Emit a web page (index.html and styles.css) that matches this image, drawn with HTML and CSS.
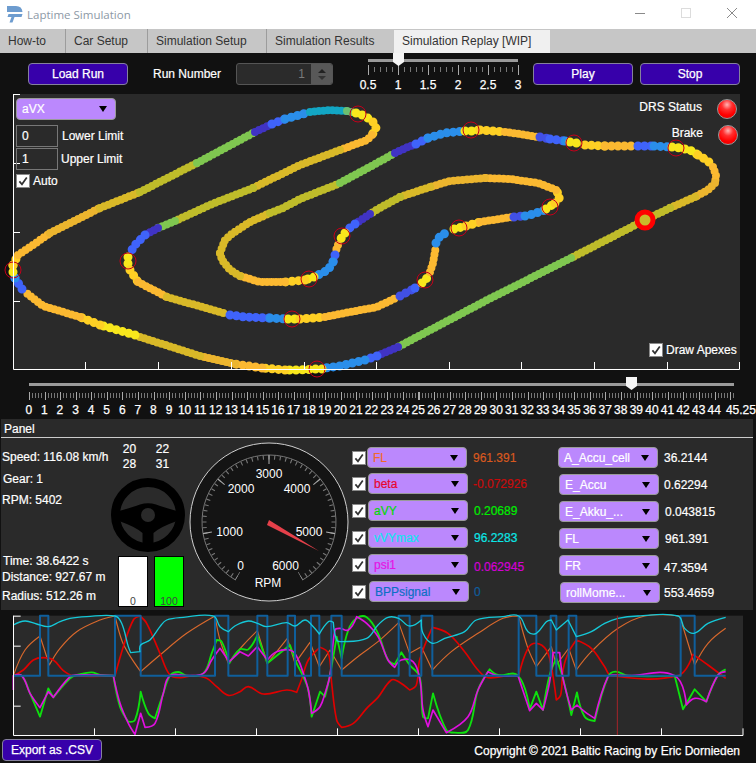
FILE: index.html
```html
<!DOCTYPE html>
<html lang="en">
<head>
<meta charset="utf-8">
<title>Laptime Simulation</title>
<link rel="stylesheet" href="styles.css">
</head>
<body>
<svg class="defs" width="0" height="0" aria-hidden="true"><defs>
<symbol id="tick" viewBox="0 0 14 14"><path d="M2.8 7.4 5.8 10.8 11.4 2.8" fill="none" stroke="#333" stroke-width="2"/></symbol>
<symbol id="caret" viewBox="0 0 8 6"><path d="M0 0H8L4 6Z" fill="#000"/></symbol>
</defs></svg>

<header class="titlebar">
  <svg class="logo" viewBox="0 0 16 17"><path d="M0 0H9Q15 0 15.500 6H0Z M1.500 8H15.500L14.500 11H7.500L5.500 16.500H2.500L4.500 11H.5Z" fill="#6d9ccf"/></svg>
  <span class="app-title">Laptime Simulation</span>
  <div class="win-controls">
    <svg width="10" height="10" viewBox="0 0 10 10"><path d="M0 5.500H10" stroke="#8a8a8a"/></svg>
    <svg width="10" height="10" viewBox="0 0 10 10"><rect x=".5" y=".5" width="9" height="9" fill="none" stroke="#dcdcdc"/></svg>
    <svg width="10" height="10" viewBox="0 0 10 10"><path d="M0 0 10 10M10 0 0 10" stroke="#8a8a8a"/></svg>
  </div>
</header>

<nav class="tabs">
  <span class="tab tab-a">How-to</span>
  <span class="tab tab-b">Car Setup</span>
  <span class="tab tab-c">Simulation Setup</span>
  <span class="tab tab-d">Simulation Results</span>
  <span class="tab tab-active">Simulation Replay [WIP]</span>
</nav>

<section class="controls">
  <button class="btn btn-load">Load Run</button>
  <span class="run-label">Run Number</span>
  <div class="spinner"><span class="spin-value">1</span><span class="spin-arrows"><i class="up"></i><i class="down"></i></span></div>
  <div class="speed-slider">
    <div class="rail"></div>
    <div class="thumb"></div>
    <div class="speed-ticks"></div>
    <div class="speed-labels"><span>0.5</span><span>1</span><span>1.5</span><span>2</span><span>2.5</span><span>3</span></div>
  </div>
  <button class="btn btn-play">Play</button>
  <button class="btn btn-stop">Stop</button>
</section>

<section class="track-plot">
  <svg class="track-svg" width="756" height="276" viewBox="0 94 756 276">
    <rect class="plot-bg" x="14" y="94" width="726" height="275"/>
    <g class="tr">
      <path class="au" d="M220 253 225 240 233 233 250 222 270 213"/>
      <path class="yg" d="M270 213 283 208 300 199 333 186 340 183"/>
      <path class="gr" d="M340 183 377 163 395 153"/>
      <path class="in" d="M395 153 408 147 416 144"/>
      <path class="bl" d="M416 144 428 138"/>
      <path class="sk" d="M428 138 445 133 464 131"/>
      <path class="ye" d="M465 131 471 131 480 130"/>
      <path class="yo" d="M480 130 505 132"/>
      <path class="or" d="M505 132 520 134 538 137"/>
      <path class="in2" d="M540 137 550 139"/>
      <path class="bl" d="M550 139 565 141"/>
      <path class="sk" d="M565 141 570 142"/>
      <path class="ye" d="M570 142 582 144"/>
      <path class="yo" d="M585 145 605 146"/>
      <path class="or bead" d="M605 146 636 146"/>
      <path class="bl" d="M638 146 652 146"/>
      <path class="sk" d="M654 146 670 147"/>
      <path class="ye" d="M672 147 680 148 690 150 698 155"/>
      <path class="yo" d="M698 155 708 161 713 167"/>
      <path class="or" d="M713 167 716 175 715 183"/>
      <path class="or2" d="M715 183 708 190 695 197"/>
      <path class="au" d="M695 197 670 208"/>
      <path class="yg" d="M670 208 645 220 610 238 571 258"/>
      <path class="gr" d="M571 258 491 298 398 347"/>
      <path class="in" d="M398 347 377 356"/>
      <path class="bl" d="M377 356 365 360"/>
      <path class="sk" d="M365 360 340 366 325 368"/>
      <path class="ye" d="M322 369 317 369 300 370 285 370"/>
      <path class="yo" d="M285 370 262 368"/>
      <path class="or bead" d="M262 368 235 364"/>
      <path class="or2" d="M235 364 200 356"/>
      <path class="au" d="M200 356 137 336"/>
      <path class="ye" d="M135 335 100 325"/>
      <path class="yo" d="M100 325 80 317"/>
      <path class="or" d="M80 317 43 306 24 291"/>
      <path class="bl" d="M22 289 15 278"/>
      <path class="sk" d="M15 278 14 272"/>
      <path class="ye" d="M13 272 13 265"/>
      <path class="yo" d="M13 265 18 255"/>
      <path class="or" d="M18 255 33 245 50 233"/>
      <path class="or2" d="M50 233 100 208"/>
      <path class="au" d="M100 208 140 192"/>
      <path class="yg" d="M140 192 197 163"/>
      <path class="gr" d="M197 163 255 132"/>
      <path class="in" d="M255 132 272 124"/>
      <path class="bl" d="M272 124 285 119"/>
      <path class="sk" d="M285 119 310 112"/>
      <path class="cy" d="M310 112 330 110 347 111"/>
      <path class="te" d="M347 111 356 113"/>
      <path class="ye" d="M356 113 365 116 373 122"/>
      <path class="yo" d="M373 122 376 128 372 135"/>
      <path class="or" d="M372 135 367 140 340 150"/>
      <path class="au" d="M340 150 300 165 253 188"/>
      <path class="yg" d="M253 188 212 204 175 221"/>
      <path class="gr" d="M175 221 158 228"/>
      <path class="in" d="M158 228 145 235"/>
      <path class="bl" d="M145 235 135 245 130 253"/>
      <path class="ye" d="M128 257 128 266"/>
      <path class="yo" d="M130 270 138 282"/>
      <path class="or" d="M138 282 167 297"/>
      <path class="au" d="M167 297 227 314"/>
      <path class="bl" d="M230 315 245 317 270 318"/>
      <path class="sk" d="M270 318 285 319"/>
      <path class="ye" d="M288 319 296 319"/>
      <path class="yo" d="M300 319 325 317"/>
      <path class="or" d="M325 317 345 313 377 307 398 297"/>
      <path class="in2" d="M400 296 415 288"/>
      <path class="bl" d="M415 288 420 284"/>
      <path class="ye" d="M422 283 428 277"/>
      <path class="or" d="M430 272 433 263 436 246"/>
      <path class="sk" d="M436 243 440 236 450 231"/>
      <path class="ye" d="M454 229 466 226"/>
      <path class="yo" d="M466 226 480 222"/>
      <path class="or" d="M480 222 512 217"/>
      <path class="in2" d="M514 217 522 216"/>
      <path class="sk" d="M525 216 530 215 545 210"/>
      <path class="ye" d="M546 209 555 203"/>
      <path class="yo" d="M555 203 560 197 556 190"/>
      <path class="or" d="M556 190 538 183 510 179 485 178"/>
      <path class="or2" d="M485 178 450 181 430 187"/>
      <path class="au" d="M430 187 400 197"/>
      <path class="yg" d="M400 197 378 209 370 214"/>
      <path class="in" d="M370 214 355 224"/>
      <path class="bl" d="M355 224 347 230"/>
      <path class="ye" d="M345 233 340 240"/>
      <path class="or" d="M338 245 335 253"/>
      <path class="bl" d="M335 255 333 262"/>
      <path class="sk" d="M333 262 328 270 316 276"/>
      <path class="ye" d="M314 277 305 280"/>
      <path class="yo" d="M305 280 285 282"/>
      <path class="or" d="M285 282 260 282 240 276"/>
      <path class="au" d="M240 276 230 270 222 260 220 253"/>
    </g>
    <g class="apex">
      <circle cx="358" cy="114" r="8"/><circle cx="471" cy="130" r="8"/><circle cx="574" cy="143" r="8"/>
      <circle cx="676" cy="148" r="8"/><circle cx="13" cy="270" r="8"/><circle cx="128" cy="261" r="8"/>
      <circle cx="292" cy="319" r="8"/><circle cx="317" cy="369" r="8"/><circle cx="309" cy="279" r="8"/>
      <circle cx="342" cy="236" r="8"/><circle cx="425" cy="280" r="8"/><circle cx="459" cy="228" r="8"/>
      <circle cx="550" cy="207" r="8"/>
    </g>
    <circle class="car" cx="645" cy="220" r="8"/>
    <path class="axis" d="M13.500 94V369.500H739.500V362M13.500 94.500H20M13.500 163.500H20M13.500 232.500H20M13.500 301.500H20M85.500 369V362M158.500 369V362M231.500 369V362M304.500 369V362M376.500 369V362M449.500 369V362M521.500 369V362M594.500 369V362M667.500 369V362"/>
  </svg>

  <div class="plot-tools">
    <div class="dd dd-plot"><span class="dd-text">aVX</span><svg class="caret"><use href="#caret"/></svg></div>
    <div class="limit limit-lower"><span class="limit-box">0</span><span class="limit-name">Lower Limit</span></div>
    <div class="limit limit-upper"><span class="limit-box">1</span><span class="limit-name">Upper Limit</span></div>
    <div class="check-row"><span class="check"><svg><use href="#tick"/></svg></span><span>Auto</span></div>
  </div>
  <div class="status">
    <div class="status-row status-drs"><span>DRS Status</span><i class="led"></i></div>
    <div class="status-row"><span>Brake</span><i class="led"></i></div>
  </div>
  <div class="check-row apex-toggle"><span class="check"><svg><use href="#tick"/></svg></span><span>Draw Apexes</span></div>
</section>

<section class="timeline">
  <div class="rail"></div>
  <div class="thumb time-thumb"></div>
  <div class="time-ticks"></div>
  <div class="time-labels"><span>0</span><span>1</span><span>2</span><span>3</span><span>4</span><span>5</span><span>6</span><span>7</span><span>8</span><span>9</span><span>10</span><span>11</span><span>12</span><span>13</span><span>14</span><span>15</span><span>16</span><span>17</span><span>18</span><span>19</span><span>20</span><span>21</span><span>22</span><span>23</span><span>24</span><span>25</span><span>26</span><span>27</span><span>28</span><span>29</span><span>30</span><span>31</span><span>32</span><span>33</span><span>34</span><span>35</span><span>36</span><span>37</span><span>38</span><span>39</span><span>40</span><span>41</span><span>42</span><span>43</span><span>44</span><span class="last-label">45.25</span></div>
</section>

<section class="panel">
  <div class="panel-title">Panel</div>
  <div class="panel-body">
    <div class="info">
      <p class="i-speed">Speed: 116.08 km/h</p>
      <p class="i-gear">Gear: 1</p>
      <p class="i-rpm">RPM: 5402</p>
      <p class="i-time">Time: 38.6422 s</p>
      <p class="i-dist">Distance: 927.67 m</p>
      <p class="i-rad">Radius: 512.26 m</p>
    </div>
    <div class="driver">
      <div class="temps"><span>20</span><span>22</span><span>28</span><span>31</span></div>
      <svg class="wheel" width="74" height="74" viewBox="-37 -37 74 74">
        <circle class="wheel-ring" r="32.500"/>
        <path d="M-29 -4Q-15 -8 -8 -10.500 0 -13 8 -10.500 15 -8 29 -4L29 6Q12 12 5.500 18V31H-5.500V18Q-12 12 -29 6Z"/>
        <circle class="wheel-hub" r="7"/>
      </svg>
      <div class="pedals">
        <div class="pedal pedal-throttle"><span>0</span></div>
        <div class="pedal pedal-brake"><span>100</span></div>
      </div>
    </div>
    <svg class="gauge" width="162" height="162" viewBox="-81 -81 162 162">
      <circle class="g-face" r="79"/>
      <path class="g-arc" d="M-33.500 58.020A67 67 0 1 1 33.500 58.020"/>
      <path class="g-minor" pathLength="300" d="M-32.250 55.860A64.500 64.500 0 1 1 32.250 55.860"/>
      <path class="g-major" pathLength="300" d="M-31.250 54.130A62.500 62.500 0 1 1 31.250 54.130"/>
      <text x="0" y="-44">3000</text>
      <text x="-28" y="-29">2000</text>
      <text x="28" y="-29">4000</text>
      <text x="-39.500" y="14">1000</text>
      <text x="40" y="14">5000</text>
      <text x="-28.500" y="48">0</text>
      <text x="16.500" y="48">6000</text>
      <text x="-1" y="65">RPM</text>
      <path class="g-needle" d="M0 -2 -2 3 50 29Z"/>
    </svg>
    <div class="signals sig-a">
      <div class="sig"><span class="check"><svg><use href="#tick"/></svg></span><div class="dd dd-s1"><span class="dd-text c-fl">FL</span><svg class="caret"><use href="#caret"/></svg></div><span class="val val6 v-fl">961.391</span></div>
      <div class="sig gap5"><span class="check"><svg><use href="#tick"/></svg></span><div class="dd dd-s2"><span class="dd-text c-beta">beta</span><svg class="caret"><use href="#caret"/></svg></div><span class="val val5 v-beta">-0.072926</span></div>
      <div class="sig"><span class="check"><svg><use href="#tick"/></svg></span><div class="dd dd-s2"><span class="dd-text c-ay">aVY</span><svg class="caret"><use href="#caret"/></svg></div><span class="val val6 v-ay">0.20689</span></div>
      <div class="sig"><span class="check"><svg><use href="#tick"/></svg></span><div class="dd dd-s2"><span class="dd-text c-vy">vVYmax</span><svg class="caret"><use href="#caret"/></svg></div><span class="val val6 v-vy">96.2283</span></div>
      <div class="sig gap7"><span class="check"><svg><use href="#tick"/></svg></span><div class="dd dd-s2"><span class="dd-text c-psi">psi1</span><svg class="caret"><use href="#caret"/></svg></div><span class="val val6 val-low v-psi">0.062945</span></div>
      <div class="sig"><span class="check"><svg><use href="#tick"/></svg></span><div class="dd dd-s3"><span class="dd-text c-bpp">BPPsignal</span><svg class="caret"><use href="#caret"/></svg></div><span class="val val5 v-bpp">0</span></div>
    </div>
    <div class="signals sig-b">
      <div class="sig"><div class="dd"><span class="dd-text">A_Accu_cell</span><svg class="caret"><use href="#caret"/></svg></div><span class="val val6">36.2144</span></div>
      <div class="sig"><div class="dd dd-s1"><span class="dd-text">E_Accu</span><svg class="caret"><use href="#caret"/></svg></div><span class="val val5">0.62294</span></div>
      <div class="sig"><div class="dd dd-s1"><span class="dd-text">E_Akku_...</span><svg class="caret"><use href="#caret"/></svg></div><span class="val val6">0.043815</span></div>
      <div class="sig"><div class="dd dd-s1"><span class="dd-text">FL</span><svg class="caret"><use href="#caret"/></svg></div><span class="val val6">961.391</span></div>
      <div class="sig gap7"><div class="dd dd-s1"><span class="dd-text">FR</span><svg class="caret"><use href="#caret"/></svg></div><span class="val val5 val-low">47.3594</span></div>
      <div class="sig"><div class="dd dd-s2"><span class="dd-text">rollMome...</span><svg class="caret"><use href="#caret"/></svg></div><span class="val val4">553.4659</span></div>
    </div>
  </div>
</section>

<svg class="chart" width="756" height="128" viewBox="0 0 2268 384">
  <rect class="plot-bg" x="42" y="17" width="2187" height="359"/>
  <polyline class="trace t-orange" points="40,197 75,120 120,78 148,165 180,115 230,65 300,30 345,18 365,90 385,130 422,185 480,135 560,70 645,18 660,90 685,160 730,105 772,62 802,160 862,85 885,160 930,97 958,170 990,120 1025,180 1080,135 1134,95 1196,38 1229,130 1264,110 1297,180 1354,125 1434,70 1509,25 1556,18 1584,115 1609,170 1654,110 1669,165 1706,115 1729,180 1774,125 1854,55 1934,18 2039,18 2084,165 2124,100 2177,55"/>
  <polyline class="trace t-red" points="40,197 70,180 100,150 130,143 160,150 190,182 220,197 345,197 370,110 400,30 420,18 440,40 480,130 510,195 540,203 580,197 620,205 650,230 685,256 720,245 745,230 790,252 860,240 890,247 905,208 925,150 960,112 985,130 995,220 1010,330 1025,352 1060,340 1100,295 1134,262 1174,210 1196,215 1229,240 1249,225 1259,150 1297,52 1344,70 1394,125 1434,180 1464,203 1534,195 1556,197 1584,115 1609,100 1639,120 1654,170 1669,270 1682,255 1689,180 1704,130 1729,90 1774,115 1814,170 1834,197 2034,197 2079,133 2124,165 2177,205"/>
  <polyline class="trace t-green" points="40,197 65,197 90,250 120,320 145,235 160,262 210,205 230,195 275,187 300,195 340,197 360,290 385,335 405,330 422,245 445,310 465,325 490,250 510,197 535,186 560,197 610,190 635,130 650,90 665,95 688,160 720,118 745,118 772,75 802,160 870,105 890,160 905,190 925,240 935,320 960,245 975,260 990,195 1010,80 1025,145 1045,60 1070,25 1100,22 1134,70 1164,150 1184,163 1204,127 1229,165 1259,200 1269,320 1284,325 1299,250 1339,360 1364,368 1404,360 1434,240 1469,178 1494,195 1554,197 1589,298 1609,245 1629,300 1649,195 1669,145 1689,205 1714,315 1731,247 1754,320 1784,333 1824,200 1846,185 1884,197 2024,197 2049,298 2084,238 2119,275 2154,195 2177,178"/>
  <polyline class="trace t-magenta" points="40,240 40,197 65,197 90,250 120,293 145,245 160,262 210,200 230,195 340,197 360,280 385,340 405,373 422,310 435,352 465,340 490,250 510,197 560,197 610,190 635,150 660,115 688,155 720,125 745,138 772,110 802,150 830,125 875,122 895,150 910,190 925,240 935,310 960,290 975,250 990,195 1005,60 1020,55 1045,60 1070,20 1100,40 1134,80 1164,150 1184,172 1204,150 1239,155 1259,205 1269,300 1284,350 1299,300 1339,368 1404,320 1434,240 1464,185 1494,197 1554,197 1589,302 1609,280 1629,300 1649,215 1659,128 1679,128 1689,205 1714,300 1731,285 1754,305 1784,325 1824,200 1846,195 1884,197 2024,197 2059,285 2084,265 2119,275 2154,195 2177,185"/>
  <path class="t-blue" d="M40 197H120V17H145V197H345V17H422V197H645V17H685V197H772V17H802V197H863V17H885V197H933V17H958V197H994V17H1025V197H1196V17H1229V197H1264V17H1297V197H1556V17H1609V197H1652V17H1669V197H1706V17H1729V197H2042V17H2084V197H2177"/>
  <polyline class="trace t-cyan" points="40,45 75,33 110,42 145,50 180,35 210,25 260,20 345,18 365,40 385,110 392,128 420,125 422,105 450,90 480,50 500,30 550,22 640,18 660,50 685,65 710,45 745,33 772,40 800,50 860,38 885,48 915,30 935,45 958,72 985,35 1000,37 1010,90 1025,95 1100,85 1134,45 1164,22 1196,25 1229,48 1264,30 1269,70 1297,100 1334,85 1394,65 1429,30 1509,20 1556,18 1584,65 1609,70 1639,35 1654,30 1669,60 1704,30 1729,80 1774,65 1814,40 1854,25 1914,18 2034,18 2054,55 2082,70 2124,40 2177,22"/>
  <path class="c-cursor" d="M1852 17V376"/>
  <path class="c-axis" d="M40.500 17V376.500H2229V355M40 18.500H62M40 108.500H62M40 288.500H62M283.500 376V355M526.500 376V355M769.500 376V355M1012.500 376V355M1255.500 376V355M1498.500 376V355M1741.500 376V355M1984.500 376V355"/>
</svg>

<footer class="footer">
  <button class="btn btn-export">Export as .CSV</button>
  <span class="copyright">Copyright © 2021 Baltic Racing by Eric Dornieden</span>
</footer>
<script src="chart.js"></script>
</body>
</html>
```
FILE: styles.css
```css
* { box-sizing: border-box; }
html, body { margin: 0; padding: 0; }
body {
  width: 756px;
  height: 763px;
  overflow: hidden;
  background: #111;
  color: #fff;
  font: 12px/16px "Liberation Sans", Arial, sans-serif;
}
.defs { position: absolute; }
p { margin: 0; }
svg { display: block; }

/* title bar */
.titlebar { height: 29px; background: #fff; display: flex; align-items: center; position: relative; }
.logo { width: 16px; height: 17px; margin: 0 0 1px 7px; }
.app-title { margin-left: 4px; font: 11.500px/16px "Open Sans", sans-serif; color: #8d99a6; }
.win-controls { margin: 0 0 3px auto; display: flex; gap: 36px; padding-right: 19px; }

/* tabs */
.tabs { height: 24px; background: #c6c6c6; display: flex; align-items: stretch; color: #333; }
.tab { padding: 4px 0 0 8px; border-right: 1px solid #9c9c9c; margin: 0; }
.tab-a { width: 66px; }
.tab-b { width: 82px; }
.tab-c { width: 119px; }
.tab-d { width: 127px; border-right: 0; }
.tab-active { width: 156px; margin-top: 1px; padding: 3px 0 0 8px; background: #f0f0f0; border-right: 0; }

/* top controls */
.controls { height: 41px; display: flex; align-items: flex-start; padding-left: 28px; }
.btn {
  display: block;
  height: 22px;
  padding: 0;
  color: #fff;
  background: #3700aa;
  border: 1px solid #85819c;
  border-radius: 4px;
  font: 12px/18px "Liberation Sans", Arial, sans-serif;
  -webkit-text-stroke: .25px #fff;
}
.btn-load { width: 100px; margin-top: 10px; }
.btn-play { width: 100px; margin: 10px 0 0 15px; }
.btn-stop { width: 100px; margin: 10px 0 0 7px; }
.run-label { margin: 13px 0 0 25px; width: 83px; -webkit-text-stroke: .2px #fff; }
.spinner {
  width: 97px; height: 22px; margin-top: 10px;
  display: flex;
  background: #2b2b2b; border: 1px solid #555; border-radius: 3px;
}
.spin-value { flex: 1; text-align: right; padding-right: 6px; line-height: 20px; color: #7a7a7a; }
.spin-arrows { width: 21px; background: #585858; display: flex; flex-direction: column; align-items: center; justify-content: center; gap: 3px; border-radius: 0 2px 2px 0; }
.spin-arrows i { width: 0; height: 0; border-left: 4px solid transparent; border-right: 4px solid transparent; }
.spin-arrows .up { border-bottom: 4px solid #222; }
.spin-arrows .down { border-top: 4px solid #333; }

.speed-slider { width: 150px; margin-left: 35px; position: relative; padding-top: 6px; height: 41px; }
.rail { height: 3px; background: #9a9a9a; }
.thumb {
  position: absolute; top: 0; left: 25px;
  width: 11px; height: 13px;
  background: #f4f4f4;
  clip-path: polygon(0 0, 100% 0, 100% 70%, 50% 100%, 0 70%);
}
.speed-ticks {
  height: 10px; margin-top: 3px; width: 151px;
  background:
    repeating-linear-gradient(90deg, #aaa 0 1px, transparent 1px 30px) 0 0 / 100% 10px no-repeat,
    repeating-linear-gradient(90deg, #777 0 1px, transparent 1px 6px) 0 2px / 100% 5px no-repeat;
}
.speed-labels { display: flex; margin: 3px 0 0 -15px; width: 180px; -webkit-text-stroke: .25px #fff; }
.speed-labels span { flex: 0 0 30px; text-align: center; line-height: 14px; }

/* track plot */
.track-plot { position: relative; height: 276px; }
.track-svg { overflow: visible; }
.plot-bg { fill: #2a2a2a; }
.tr path { fill: none; stroke-width: 8; stroke-linecap: round; stroke-dasharray: 0 4.500; }
.tr .ye, .tr .yo, .tr .bl, .tr .sk, .tr .in2, .tr .bead { stroke-width: 9; stroke-dasharray: 0 6.500; }
.gr { stroke: #7fc750; } .yg { stroke: #bfbc2a; } .au { stroke: #d9b928; }
.or { stroke: #fbb931; } .or2 { stroke: #ecb52e; } .yo { stroke: #fed024; }
.ye { stroke: #f8e71c; } .in { stroke: #4033c4; } .in2 { stroke: #4150e6; }
.bl { stroke: #3f63fa; } .sk { stroke: #2a8eea; } .cy { stroke: #12a6c4; } .te { stroke: #6cc070; }
.apex circle { fill: none; stroke: #c3001a; stroke-width: 1; }
.car { fill: #c9b92a; stroke: #f00; stroke-width: 5; }
.axis { fill: none; stroke: #fff; stroke-width: 1; }

.plot-tools { position: absolute; left: 16px; top: 4px; width: 130px; -webkit-text-stroke: .2px #fff; }
.dd {
  width: 100px; height: 21px;
  display: flex; align-items: center; justify-content: space-between;
  padding: 0 8px 0 5px;
  background: #bb88fd; border: 1px solid #9a9a9a; border-radius: 4px;
  flex: none;
}
.dd-plot { height: 22px; }
.dd-text { white-space: nowrap; }
.caret { width: 8px; height: 6px; }
.limit { display: flex; align-items: center; height: 22px; }
.limit-lower { margin-top: 5px; }
.limit-upper { margin-top: 1px; }
.limit-box { width: 42px; height: 22px; padding-left: 5px; line-height: 20px; border: 1px solid #777; }
.limit-name { margin-left: 4px; }
.limit-upper .limit-name { margin-left: 3px; }
.check-row { display: flex; align-items: center; gap: 3px; margin-top: 3px; -webkit-text-stroke: .2px #fff; }
.check { width: 14px; height: 14px; flex: none; background: #fff; border: 1px solid #8a8a8a; display: block; }
.check svg { width: 12px; height: 12px; }
.apex-toggle { position: absolute; left: 649px; top: 248px; margin: 0; }
.status { position: absolute; right: 18px; top: 5px; -webkit-text-stroke: .2px #fff; }
.status-row { display: flex; justify-content: flex-end; align-items: flex-start; gap: 15px; height: 20px; margin-bottom: 6px; line-height: 16px; }
.status-drs { padding-right: 1px; }
.led {
  display: block; width: 20px; height: 20px; border-radius: 50%;
  border: 1.500px solid #999;
  background: radial-gradient(circle at 50% 26%, #ffb4b4 0, #ff3030 32%, #f00 65%, #e00000 100%);
}

/* timeline */
.timeline { height: 49px; margin-left: 29px; width: 705px; padding-top: 13px; position: relative; }
.time-thumb { top: 7px; left: 597px; }
.time-ticks {
  height: 8px; margin-top: 6px; width: 706px;
  background:
    repeating-linear-gradient(90deg, #aaa 0 1px, transparent 1px 15.580px) 0 0 / 100% 8px no-repeat,
    repeating-linear-gradient(90deg, #777 0 1px, transparent 1px 3.116px) 0 1px / 100% 5px no-repeat;
}
.time-labels { display: flex; margin: 2px 0 0 -8px; -webkit-text-stroke: .25px #fff; }
.time-labels span { flex: 0 0 15.580px; display: flex; justify-content: center; line-height: 16px; white-space: nowrap; }
.time-labels .last-label { margin-left: 3.900px; }

/* panel */
.panel { height: 191px; width: 752px; margin-left: 1px; background: #2a2a2a; }
.panel-title { height: 19px; padding: 2px 0 0 3px; border-bottom: 1px solid #ccc; -webkit-text-stroke: .2px #fff; }
.panel-body { display: flex; height: 172px; -webkit-text-stroke: .2px #fff; }
.info { width: 109px; padding-left: 1px; flex: none; }
.i-speed { margin-top: 11px; }
.i-gear { margin: 6px 0 0 1px; }
.i-rpm { margin-top: 5px; }
.i-time { margin: 45px 0 0 1px; }
.i-rad { margin-top: 3px; }
.driver { width: 78px; flex: none; }
.temps { display: grid; grid-template-columns: 33px 33px; margin: 4px 0 0 3px; text-align: center; line-height: 15px; }
.wheel { margin: 6px 0 0 1px; }
.wheel-ring { fill: none; stroke: #000; stroke-width: 9; }
.wheel-hub { fill: #2a2a2a; }
.pedals { display: flex; gap: 6px; margin: 4px 0 0 8px; }
.pedal { width: 30px; height: 51px; border: 1.500px solid #000; display: flex; align-items: flex-end; justify-content: center; overflow: hidden; }
.pedal span { font-size: 10.500px; line-height: 9px; color: #444; -webkit-text-stroke: 0; }
.pedal-throttle { background: #fff; }
.pedal-brake { background: #0f0; }
.gauge { flex: none; margin-top: 3px; }
.gauge text { fill: #fff; text-anchor: middle; }
.g-face { fill: #141414; stroke: #cfcfcf; stroke-width: 1; }
.g-arc { fill: none; stroke: #777; stroke-width: 1; }
.g-minor { fill: none; stroke: #777; stroke-width: 4; stroke-dasharray: 1 4; stroke-dashoffset: .5; }
.g-major { fill: none; stroke: #aaa; stroke-width: 9; stroke-dasharray: 1 49; stroke-dashoffset: .5; }
.g-needle { fill: #e5404a; }
.signals { flex: none; padding-top: 9px; }
.sig-a { width: 206px; margin-left: 2px; }
.sig { display: flex; align-items: center; height: 21px; margin-bottom: 6px; }
.gap5 { margin-top: -1px; }
.gap7 { margin-top: 1px; }
.dd-s1 { margin-left: 1px; }
.dd-s2 { margin-left: 2px; }
.dd-s3 { margin-left: 3px; }
.val { white-space: nowrap; }
.val4 { margin-left: 4px; } .val5 { margin-left: 5px; } .val6 { margin-left: 6px; }
.val-low { margin-top: 4px; }
.c-fl { color: #f2692c; } .c-beta { color: #e8062e; } .c-ay { color: #05d905; }
.c-vy { color: #10e4f0; } .c-psi { color: #e414e4; } .c-bpp { color: #0d6fc4; }
.c-fl, .c-beta, .c-ay, .c-vy, .c-psi, .c-bpp { -webkit-text-stroke: .2px currentColor; }
.v-fl { color: #d8591f; } .v-beta { color: #c80a0a; } .v-ay { color: #00ee00; }
.v-vy { color: #0be6e6; } .v-psi { color: #d400d4; } .v-bpp { color: #0f5e9e; }
.v-fl, .v-beta, .v-ay, .v-vy, .v-psi, .v-bpp { -webkit-text-stroke: .2px currentColor; }

/* bottom chart */
.chart polyline, .chart path { fill: none; stroke-linejoin: round; }
.t-orange { stroke: #d8682c; stroke-width: 3.500; }
.t-red { stroke: #e00000; stroke-width: 5; }
.t-green { stroke: #0ee00e; stroke-width: 5.500; }
.t-magenta { stroke: #e010e0; stroke-width: 5; }
.t-blue { stroke: #0f5f9c; stroke-width: 6; }
.t-cyan { stroke: #15c8d8; stroke-width: 4; }
.c-cursor { stroke: #a5232a; stroke-width: 3; }
.c-axis { stroke: #fff; stroke-width: 3; }

/* footer */
.footer { height: 25px; display: flex; align-items: flex-start; justify-content: space-between; padding: 1px 16px 0 2px; }
.btn-export { width: 100px; height: 22px; }
.copyright { margin-top: 4px; -webkit-text-stroke: .25px #fff; }
```
FILE: chart.js
```js
// Turns each sampled trace into a smooth curve, keeping sharp corners at the data's cusps.
document.querySelectorAll('polyline.trace').forEach(function (line) {
  var pts = line.getAttribute('points').trim().split(/\s+/).map(function (p) {
    return p.split(',').map(Number);
  });
  function unit(a, b) {
    var dx = b[0] - a[0], dy = b[1] - a[1], l = Math.hypot(dx, dy) || 1;
    return [dx / l, dy / l, l];
  }
  function handle(i) {
    if (i === 0 || i === pts.length - 1) return [0, 0];
    var u = unit(pts[i - 1], pts[i]), v = unit(pts[i], pts[i + 1]);
    if (u[0] * v[0] + u[1] * v[1] < 0.35) return [0, 0];
    var t = unit(pts[i - 1], pts[i + 1]);
    return [t[0], t[1]];
  }
  var d = 'M' + pts[0][0] + ' ' + pts[0][1];
  for (var i = 0; i < pts.length - 1; i++) {
    var a = pts[i], b = pts[i + 1], h0 = handle(i), h1 = handle(i + 1);
    var k = unit(a, b)[2] * 0.36;
    d += 'C' + (a[0] + h0[0] * k).toFixed(1) + ' ' + (a[1] + h0[1] * k).toFixed(1) + ' ' +
         (b[0] - h1[0] * k).toFixed(1) + ' ' + (b[1] - h1[1] * k).toFixed(1) + ' ' + b[0] + ' ' + b[1];
  }
  var path = document.createElementNS('http://www.w3.org/2000/svg', 'path');
  path.setAttribute('class', line.getAttribute('class'));
  path.setAttribute('d', d);
  line.parentNode.replaceChild(path, line);
});
```
